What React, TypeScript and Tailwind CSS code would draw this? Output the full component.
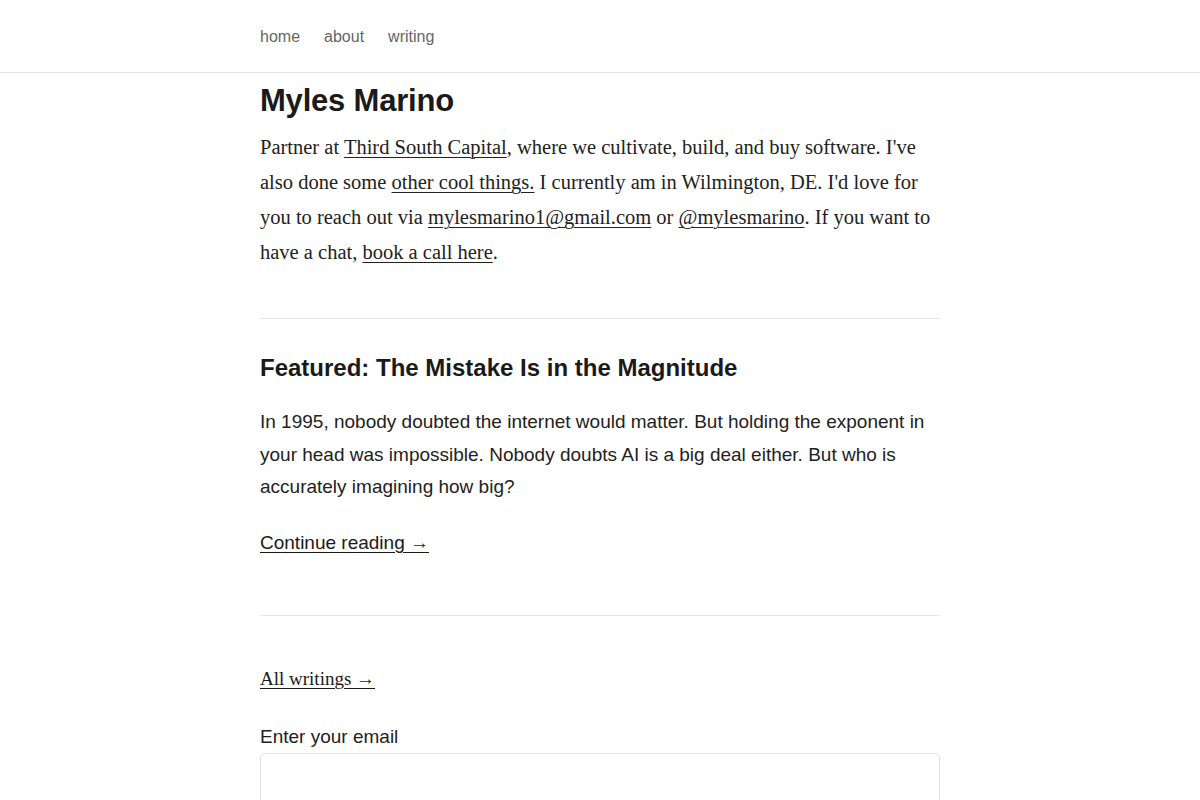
import React from "react";

const serif = { fontFamily: '"Liberation Serif", "Times New Roman", serif' };
const sans = { fontFamily: '"Liberation Sans", Arial, sans-serif' };

function NavBar() {
  return (
    <header className="h-[73px] border-b border-[#e5e5e5] bg-white">
      <nav className="mx-auto flex h-full w-[680px] items-center gap-6 pt-[2px] text-[16px] text-[#666]" style={sans}>
        <a href="#">home</a>
        <a href="#">about</a>
        <a href="#">writing</a>
      </nav>
    </header>
  );
}

function Link({ children }: { children: React.ReactNode }) {
  return (
    <a href="#" className="underline decoration-1 underline-offset-[3px]">
      {children}
    </a>
  );
}

export default function App() {
  return (
    <div className="min-h-screen bg-white text-[#1a1a1a]">
      <NavBar />
      <main className="mx-auto w-[680px]">
        <h1 className="mt-[9px] text-[31px] font-bold leading-[38px] tracking-[-0.2px]" style={sans}>
          Myles Marino
        </h1>
        <p className="mt-[10px] text-[20.5px] leading-[35px] text-[#222]" style={serif}>
          Partner at <Link>Third South Capital</Link>, where we cultivate, build, and buy software. I've also done some{" "}
          <Link>other cool things.</Link> I currently am in Wilmington, DE. I'd love for you to reach out via{" "}
          <Link>mylesmarino1@gmail.com</Link> or <Link>@mylesmarino</Link>. If you want to have a chat,{" "}
          <Link>book a call here</Link>.
        </p>

        <hr className="mt-[48px] border-0 border-t border-[#e5e5e5]" />

        <section style={sans}>
          <h2 className="mt-[33px] text-[24px] font-bold leading-[32px]">Featured: The Mistake Is in the Magnitude</h2>
          <p className="mt-[22px] text-[19px] leading-[32.5px] text-[#222]">
            In 1995, nobody doubted the internet would matter. But holding the exponent in your head was impossible. Nobody
            doubts AI is a big deal either. But who is accurately imagining how big?
          </p>
          <p className="mt-[23px] text-[19px] leading-[32px]">
            <Link>Continue reading →</Link>
          </p>
        </section>

        <hr className="mt-[56px] border-0 border-t border-[#e5e5e5]" />

        <p className="mt-[47px] text-[19px] leading-[32px]" style={serif}>
          <Link>All writings →</Link>
        </p>

        <form className="mt-[29px]" style={sans}>
          <label className="block text-[19px] leading-[26px] text-[#222]">Enter your email</label>
          <input
            type="email"
            className="mt-[3px] block h-[52px] w-full rounded-[5px] border border-[#e2e2e2] bg-white px-3 text-[18px] outline-none"
          />
        </form>
      </main>
    </div>
  );
}
